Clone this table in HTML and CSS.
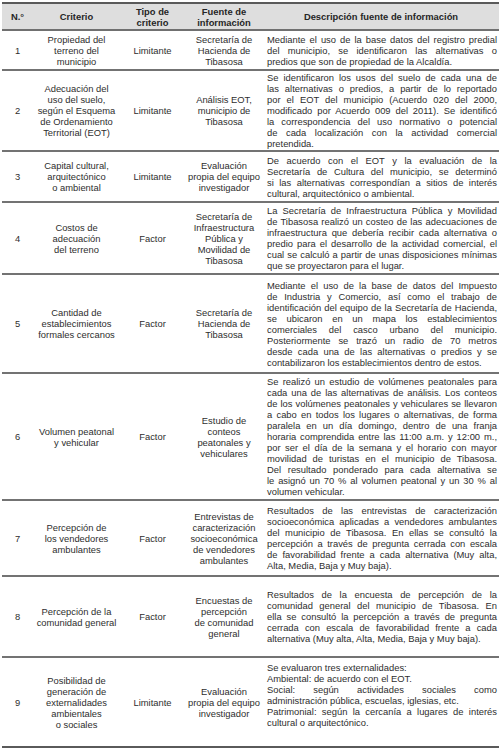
FILE: index.html
```html
<!DOCTYPE html>
<html lang="es">
<head>
<meta charset="utf-8">
<title>Criterios</title>
<link rel="stylesheet" href="styles.css">
</head>
<body>
<table class="tbl">
  <colgroup>
    <col class="c-num"><col class="c-crit"><col class="c-tipo"><col class="c-fuente"><col class="c-desc">
  </colgroup>
  <thead>
    <tr class="hd">
      <th>N.°</th>
      <th>Criterio</th>
      <th>Tipo de<br>criterio</th>
      <th>Fuente de<br>información</th>
      <th>Descripción fuente de información</th>
    </tr>
  </thead>
  <tbody>
    <tr class="r1">
      <td>1</td>
      <td>Propiedad del<br>terreno del<br>municipio</td>
      <td>Limitante</td>
      <td>Secretaría de<br>Hacienda de<br>Tibasosa</td>
      <td class="desc">
        <span class="l">Mediante el uso de la base datos del registro predial</span>
        <span class="l">del municipio, se identificaron las alternativas o</span>
        <span class="l e">predios que son de propiedad de la Alcaldía.</span>
      </td>
    </tr>
    <tr class="r2">
      <td>2</td>
      <td>Adecuación del<br>uso del suelo,<br>según el Esquema<br>de Ordenamiento<br>Territorial (EOT)</td>
      <td>Limitante</td>
      <td>Análisis EOT,<br>municipio de<br>Tibasosa</td>
      <td class="desc">
        <span class="l">Se identificaron los usos del suelo de cada una de</span>
        <span class="l">las alternativas o predios, a partir de lo reportado</span>
        <span class="l">por el EOT del municipio (Acuerdo 020 del 2000,</span>
        <span class="l">modificado por Acuerdo 009 del 2011). Se identificó</span>
        <span class="l">la correspondencia del uso normativo o potencial</span>
        <span class="l">de cada localización con la actividad comercial</span>
        <span class="l e">pretendida.</span>
      </td>
    </tr>
    <tr class="r3">
      <td>3</td>
      <td>Capital cultural,<br>arquitectónico<br>o ambiental</td>
      <td>Limitante</td>
      <td>Evaluación<br>propia del equipo<br>investigador</td>
      <td class="desc">
        <span class="l">De acuerdo con el EOT y la evaluación de la</span>
        <span class="l">Secretaría de Cultura del municipio, se determinó</span>
        <span class="l">si las alternativas correspondían a sitios de interés</span>
        <span class="l e">cultural, arquitectónico o ambiental.</span>
      </td>
    </tr>
    <tr class="r4">
      <td>4</td>
      <td>Costos de<br>adecuación<br>del terreno</td>
      <td>Factor</td>
      <td>Secretaría de<br>Infraestructura<br>Pública y<br>Movilidad de<br>Tibasosa</td>
      <td class="desc">
        <span class="l">La Secretaría de Infraestructura Pública y Movilidad</span>
        <span class="l">de Tibasosa realizó un costeo de las adecuaciones de</span>
        <span class="l">infraestructura que debería recibir cada alternativa o</span>
        <span class="l">predio para el desarrollo de la actividad comercial, el</span>
        <span class="l">cual se calculó a partir de unas disposiciones mínimas</span>
        <span class="l e">que se proyectaron para el lugar.</span>
      </td>
    </tr>
    <tr class="r5">
      <td>5</td>
      <td>Cantidad de<br>establecimientos<br>formales cercanos</td>
      <td>Factor</td>
      <td>Secretaría de<br>Hacienda de<br>Tibasosa</td>
      <td class="desc">
        <span class="l">Mediante el uso de la base de datos del Impuesto</span>
        <span class="l">de Industria y Comercio, así como el trabajo de</span>
        <span class="l">identificación del equipo de la Secretaría de Hacienda,</span>
        <span class="l">se ubicaron en un mapa los establecimientos</span>
        <span class="l">comerciales del casco urbano del municipio.</span>
        <span class="l">Posteriormente se trazó un radio de 70 metros</span>
        <span class="l">desde cada una de las alternativas o predios y se</span>
        <span class="l e">contabilizaron los establecimientos dentro de estos.</span>
      </td>
    </tr>
    <tr class="r6">
      <td>6</td>
      <td>Volumen peatonal<br>y vehicular</td>
      <td>Factor</td>
      <td>Estudio de<br>conteos<br>peatonales y<br>vehiculares</td>
      <td class="desc">
        <span class="l">Se realizó un estudio de volúmenes peatonales para</span>
        <span class="l">cada una de las alternativas de análisis. Los conteos</span>
        <span class="l">de los volúmenes peatonales y vehiculares se llevaron</span>
        <span class="l">a cabo en todos los lugares o alternativas, de forma</span>
        <span class="l">paralela en un día domingo, dentro de una franja</span>
        <span class="l">horaria comprendida entre las 11:00 a.m. y 12:00 m.,</span>
        <span class="l">por ser el día de la semana y el horario con mayor</span>
        <span class="l">movilidad de turistas en el municipio de Tibasosa.</span>
        <span class="l">Del resultado ponderado para cada alternativa se</span>
        <span class="l">le asignó un 70 % al volumen peatonal y un 30 % al</span>
        <span class="l e">volumen vehicular.</span>
      </td>
    </tr>
    <tr class="r7">
      <td>7</td>
      <td>Percepción de<br>los vendedores<br>ambulantes</td>
      <td>Factor</td>
      <td>Entrevistas de<br>caracterización<br>socioeconómica<br>de vendedores<br>ambulantes</td>
      <td class="desc">
        <span class="l">Resultados de las entrevistas de caracterización</span>
        <span class="l">socioeconómica aplicadas a vendedores ambulantes</span>
        <span class="l">del municipio de Tibasosa. En ellas se consultó la</span>
        <span class="l">percepción a través de pregunta cerrada con escala</span>
        <span class="l">de favorabilidad frente a cada alternativa (Muy alta,</span>
        <span class="l e">Alta, Media, Baja y Muy baja).</span>
      </td>
    </tr>
    <tr class="r8">
      <td>8</td>
      <td>Percepción de la<br>comunidad general</td>
      <td>Factor</td>
      <td>Encuestas de<br>percepción<br>de comunidad<br>general</td>
      <td class="desc">
        <span class="l">Resultados de la encuesta de percepción de la</span>
        <span class="l">comunidad general del municipio de Tibasosa. En</span>
        <span class="l">ella se consultó la percepción a través de pregunta</span>
        <span class="l">cerrada con escala de favorabilidad frente a cada</span>
        <span class="l e">alternativa (Muy alta, Alta, Media, Baja y Muy baja).</span>
      </td>
    </tr>
    <tr class="r9">
      <td>9</td>
      <td>Posibilidad de<br>generación de<br>externalidades<br>ambientales<br>o sociales</td>
      <td>Limitante</td>
      <td>Evaluación<br>propia del equipo<br>investigador</td>
      <td class="desc top">
        <span class="l e">Se evaluaron tres externalidades:</span>
        <span class="l e">Ambiental: de acuerdo con el EOT.</span>
        <span class="l">Social: según actividades sociales como</span>
        <span class="l e">administración pública, escuelas, iglesias, etc.</span>
        <span class="l">Patrimonial: según la cercanía a lugares de interés</span>
        <span class="l e">cultural o arquitectónico.</span>
      </td>
    </tr>
  </tbody>
</table>
</body>
</html>
```
FILE: styles.css
```css
html, body {
  margin: 0;
  padding: 0;
  background: #ffffff;
}

body {
  font-family: "Liberation Sans", Arial, sans-serif;
  color: #2e2e2e;
}

.tbl {
  margin: 2px 0 0 2px;
  width: 497px;
  table-layout: fixed;
  border-collapse: collapse;
  font-size: 9.4px;
  line-height: 11px;
}

.c-num { width: 31px; }
.c-crit { width: 87px; }
.c-tipo { width: 65px; }
.c-fuente { width: 78px; }
.c-desc { width: 236px; }

.tbl th {
  background: #dedede;
  font-weight: bold;
  color: #262626;
  text-align: center;
  vertical-align: middle;
  padding: 0 1px;
  border-top: 2px solid #5a5a5a;
  border-bottom: 2px solid #707070;
}

.hd { height: 27px; }

.tbl td {
  text-align: center;
  vertical-align: middle;
  padding: 0 1px;
  border-bottom: 2px solid #737373;
}

.tbl td.desc {
  text-align: justify;
  padding: 0 2px 0 4px;
}

.tbl td.desc.top {
  vertical-align: top;
  padding-top: 4px;
}

.l {
  display: block;
  text-align: justify;
  text-align-last: justify;
}

.l.e {
  text-align-last: left;
}

.r1 { height: 40px; }
.r2 { height: 81px; }
.r3 { height: 51px; }
.r4 { height: 72px; }
.r5 { height: 99px; }
.r6 { height: 127px; }
.r7 { height: 76px; }
.r8 { height: 81px; }
.r9 { height: 90px; }

.tbl tbody tr:last-child td {
  border-bottom: 2px solid #5a5a5a;
}
```
